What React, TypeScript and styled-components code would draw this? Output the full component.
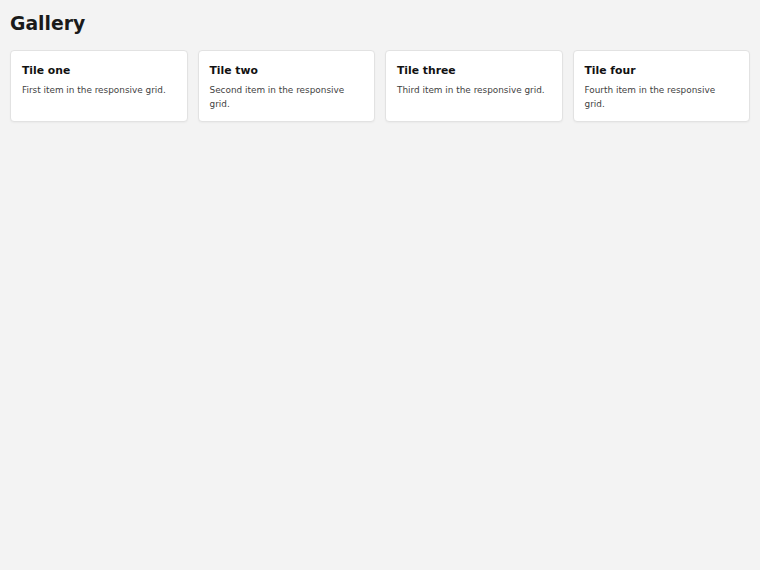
import React from 'react';
import styled, { createGlobalStyle } from 'styled-components';

const GlobalStyle = createGlobalStyle`
  html, body {
    margin: 0;
    padding: 0;
    background: #f3f3f3;
    font-family: 'DejaVu Sans', sans-serif;
  }
`;

const tiles = [
  { title: 'Tile one', text: 'First item in the responsive grid.' },
  { title: 'Tile two', text: 'Second item in the responsive grid.' },
  { title: 'Tile three', text: 'Third item in the responsive grid.' },
  { title: 'Tile four', text: 'Fourth item in the responsive grid.' },
];

export default function App() {
  return (
    <Page>
      <GlobalStyle />
      <Heading>Gallery</Heading>
      <Grid>
        {tiles.map((tile) => (
          <Tile key={tile.title}>
            <TileTitle>{tile.title}</TileTitle>
            <TileText>{tile.text}</TileText>
          </Tile>
        ))}
      </Grid>
    </Page>
  );
}

const Page = styled.div`
  padding: 13px 10px 10px;
`;

const Heading = styled.h1`
  margin: 0 0 15px;
  font-size: 18.8px;
  line-height: 22px;
  font-weight: 700;
  color: #1a1a1a;
`;

const Grid = styled.div`
  display: grid;
  grid-template-columns: repeat(4, 1fr);
  gap: 10px;
`;

const Tile = styled.div`
  background: #fff;
  border: 1px solid #e2e2e2;
  border-radius: 4px;
  box-shadow: 0 1px 2px rgba(0, 0, 0, 0.04);
  padding: 13px 11px 10px;
`;

const TileTitle = styled.div`
  font-size: 10.8px;
  line-height: 14px;
  font-weight: 700;
  color: #111;
  margin-bottom: 5px;
`;

const TileText = styled.div`
  font-size: 8.9px;
  line-height: 14px;
  color: #3f3f3f;
`;
